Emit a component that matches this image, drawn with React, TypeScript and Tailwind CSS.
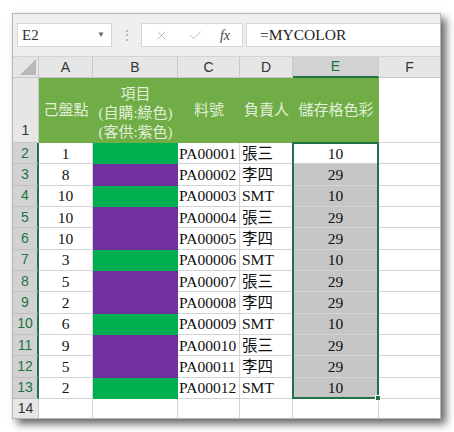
import { Check, X } from 'lucide-react';

const serif = 'font-[family-name:Liberation_Serif,Noto_Sans_CJK_TC,serif]';
const sans = 'font-[family-name:Liberation_Sans,Noto_Sans,sans-serif]';

const rows = [
  { a: '1', c: 'PA00001', d: '張三', e: '10' },
  { a: '8', c: 'PA00002', d: '李四', e: '29' },
  { a: '10', c: 'PA00003', d: 'SMT', e: '10' },
  { a: '10', c: 'PA00004', d: '張三', e: '29' },
  { a: '10', c: 'PA00005', d: '李四', e: '29' },
  { a: '3', c: 'PA00006', d: 'SMT', e: '10' },
  { a: '5', c: 'PA00007', d: '張三', e: '29' },
  { a: '2', c: 'PA00008', d: '李四', e: '29' },
  { a: '6', c: 'PA00009', d: 'SMT', e: '10' },
  { a: '9', c: 'PA00010', d: '張三', e: '29' },
  { a: '5', c: 'PA00011', d: '李四', e: '29' },
  { a: '2', c: 'PA00012', d: 'SMT', e: '10' },
];

const cell = 'border-r border-b border-[#D4D4D4] flex items-center text-[15.5px] text-[#111]';

function FormulaBar() {
  return (
    <div className="flex h-[43px] items-center border-b border-[#D4D4D4] bg-[#EFEFEF] pl-[4px]">
      <div className={`flex h-[24px] w-[95px] items-center justify-between border border-[#D6D6D6] bg-white pl-[4px] pr-[6px] text-[15px] text-[#333] ${serif}`}>
        <span>E2</span>
        <span className="text-[8px] text-[#666]">▼</span>
      </div>
      <div className="flex w-[29px] justify-center text-[14px] leading-none text-[#A8A8A8]">⋮</div>
      <div className="flex h-[24px] w-[102px] items-center border border-[#D6D6D6] bg-white">
        <div className="flex w-[38px] justify-center">
          <X size={15} strokeWidth={1.2} color="#A8A8A8" />
        </div>
        <div className="flex w-[30px] justify-center">
          <Check size={15} strokeWidth={1.2} color="#A8A8A8" />
        </div>
        <div className={`flex w-[30px] justify-center text-[14px] italic text-[#444] ${serif}`}>fx</div>
      </div>
      <div className={`ml-[3px] flex h-[24px] flex-1 items-center border-y border-l border-[#D6D6D6] bg-white pl-[13px] text-[15.5px] text-[#222] ${serif}`}>
        =MYCOLOR
      </div>
    </div>
  );
}

export default function App() {
  const cols = ['A', 'B', 'C', 'D', 'E', 'F'];
  return (
    <div className="h-[432px] w-[454px] bg-white pl-[12px] pt-[13px]">
      <div className="h-[406px] w-[429px] overflow-hidden border border-[#B5B5B5] bg-white shadow-[5px_5px_8px_rgba(0,0,0,0.6)]">
        <FormulaBar />
        <div className="relative grid grid-cols-[26px_54px_85px_62px_53px_86px_62px] grid-rows-[21px_65px_repeat(12,21.33px)_21px]">
          {/* column headers */}
          <div className="relative border-r border-b border-[#C8C8C8] bg-[#E6E6E6]">
            <div className="absolute bottom-[2px] right-[2px] h-0 w-0 border-b-[16px] border-l-[16px] border-b-[#B8B8B8] border-l-transparent" />
          </div>
          {cols.map((c) =>
            c === 'E' ? (
              <div key={c} className={`flex items-center justify-center border-r border-b-2 border-r-[#C8C8C8] border-b-[#217346] bg-[#D2D2D2] text-[14px] text-[#217346] ${sans}`}>
                {c}
              </div>
            ) : (
              <div key={c} className={`flex items-center justify-center border-r border-b border-[#C8C8C8] bg-[#E6E6E6] text-[14px] text-[#333] ${sans}`}>
                {c}
              </div>
            ),
          )}

          {/* row 1 */}
          <div className={`flex items-end justify-center border-r border-b border-[#C8C8C8] bg-[#E6E6E6] pb-[1px] text-[14px] text-[#333] ${sans}`}>1</div>
          <div className={`flex items-center justify-center bg-[#70AD47] text-[15px] text-[#E2EFDA] ${serif}`}>己盤點</div>
          <div className={`flex flex-col items-center justify-end bg-[#70AD47] pb-[1px] text-[15px] leading-[19px] text-[#E2EFDA] ${serif}`}>
            <span>項目</span>
            <span>(自購:綠色)</span>
            <span>(客供:紫色)</span>
          </div>
          <div className={`flex items-center justify-center bg-[#70AD47] text-[15px] text-[#E2EFDA] ${serif}`}>料號</div>
          <div className={`flex items-center justify-center bg-[#70AD47] text-[15px] text-[#E2EFDA] ${serif}`}>負責人</div>
          <div className={`flex items-center justify-center bg-[#70AD47] text-[15px] text-[#E2EFDA] ${serif}`}>儲存格色彩</div>
          <div className="border-b border-[#D4D4D4] bg-white" />

          {rows.map((r, i) => (
            <div key={r.c} className="contents">
              <div className={`flex items-center justify-center border-r-2 border-b border-r-[#217346] border-b-[#C0C0C0] bg-[#D2D2D2] text-[14px] text-[#217346] ${sans}`}>
                {i + 2}
              </div>
              <div className={`${cell} justify-center bg-white ${serif}`}>{r.a}</div>
              {r.e === '10' ? (
                <div className="border-b border-[#00B050] bg-[#00B050]" />
              ) : (
                <div className="border-b border-[#7030A0] bg-[#7030A0]" />
              )}
              <div className={`${cell} bg-white pl-[1px] ${serif}`}>{r.c}</div>
              <div className={`${cell} bg-white pl-[2px] ${serif}`}>{r.d}</div>
              {i === 0 ? (
                <div className={`${cell} justify-center bg-white ${serif}`}>{r.e}</div>
              ) : (
                <div className={`${cell} justify-center border-[#B4B4B4] bg-[#C6C6C6] ${serif}`}>{r.e}</div>
              )}
              <div className="border-b border-[#D4D4D4] bg-white" />
            </div>
          ))}

          {/* row 14 */}
          <div className={`flex items-center justify-center border-r border-b border-[#C8C8C8] bg-[#E6E6E6] text-[14px] text-[#333] ${sans}`}>14</div>
          <div className="border-r border-b border-[#D4D4D4]" />
          <div className="border-r border-b border-[#D4D4D4]" />
          <div className="border-r border-b border-[#D4D4D4]" />
          <div className="border-r border-b border-[#D4D4D4]" />
          <div className="border-r border-b border-[#D4D4D4]" />
          <div className="border-b border-[#D4D4D4]" />

          {/* selection outline E2:E13 */}
          <div className="pointer-events-none absolute left-[279px] top-[85px] h-[257px] w-[87px] border-2 border-[#217346]" />
          <div className="absolute left-[362px] top-[338px] h-[6px] w-[6px] border border-white bg-[#217346]" />
        </div>
      </div>
    </div>
  );
}
